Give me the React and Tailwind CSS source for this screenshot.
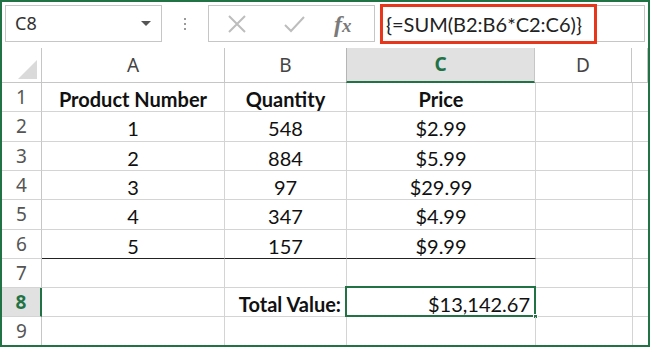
const cols = ["w-[40px]", "w-[183px]", "w-[122px]", "w-[189px]", "w-[97px]", "flex-1"];
const letters = ["", "A", "B", "C", "D", ""];
const heights = ["h-[29px]", "h-[30px]", "h-[29px]", "h-[29px]", "h-[30px]", "h-[29px]", "h-[29px]", "h-[29px]", "h-[29px]"];

const rows = [
  ["Product Number", "Quantity", "Price"],
  ["1", "548", "$2.99"],
  ["2", "884", "$5.99"],
  ["3", "97", "$29.99"],
  ["4", "347", "$4.99"],
  ["5", "157", "$9.99"],
  ["", "", ""],
  ["", "Total Value:", "$13,142.67"],
  ["", "", ""],
];

const cellFont = { fontFamily: "Lato, 'Open Sans', sans-serif" };

const TopBar = () => (
  <div className="flex items-start h-[46px] pt-[3px] bg-white">
    <div className="ml-[3px] w-[157px] h-[37px] border border-[#c6c6c6] flex items-center pl-[9px] pr-[10px]">
      <span className="text-[18px] text-[#333] flex-1" style={{ fontFamily: "'Noto Sans', sans-serif" }}>
        C8
      </span>
      <span className="w-0 h-0 border-l-[5px] border-r-[5px] border-t-[5px] border-l-transparent border-r-transparent border-t-[#555]" />
    </div>
    <div className="w-[46px] h-[37px] flex flex-col items-center justify-center gap-[3px]">
      <span className="w-[2px] h-[2px] bg-[#9a9a9a]" />
      <span className="w-[2px] h-[2px] bg-[#9a9a9a]" />
      <span className="w-[2px] h-[2px] bg-[#9a9a9a]" />
    </div>
    <div className="w-[167px] h-[37px] border border-[#c6c6c6] flex items-center">
      <svg width="56" height="20" viewBox="0 0 56 20" className="ml-[1px]">
        <path d="M19 2 L35 18 M35 2 L19 18" stroke="#bdbdbd" strokeWidth="2" fill="none" />
      </svg>
      <svg width="56" height="20" viewBox="0 0 56 20">
        <path d="M19 11 L25 17 L38 3" stroke="#bdbdbd" strokeWidth="2" fill="none" />
      </svg>
      <span className="ml-[12px] text-[24px] italic text-[#7a7a7a] font-bold leading-none" style={{ fontFamily: "'Liberation Serif', serif" }}>
        f<span className="text-[19px]">x</span>
      </span>
    </div>
    <div className="relative ml-[5px] mr-[3px] flex-1 h-[37px] border border-[#c6c6c6]">
      <div className="absolute -top-[2px] -left-px w-[217px] h-[40px] border-[3px] border-[#e8361b] flex items-center pl-[3px]">
        <span className="text-[20px] text-[#222]" style={cellFont}>
          {"{=SUM(B2:B6*C2:C6)}"}
        </span>
      </div>
    </div>
  </div>
);

const HeaderRow = () => (
  <div className="flex h-[35px]">
    {cols.map((c, i) => {
      if (i === 0)
        return (
          <div key={i} className={`${c} border-r border-b border-[#c6c6c6] relative`}>
            <svg className="absolute right-[4px] bottom-[3px]" width="19" height="19" viewBox="0 0 19 19">
              <path d="M19 0 L19 19 L0 19 Z" fill="#dadada" />
            </svg>
          </div>
        );
      const sel = i === 3;
      return (
        <div
          key={i}
          className={`${c} flex items-center justify-center text-[19px] ${
            sel
              ? "bg-[#e1e1e1] border-r border-[#c6c6c6] border-b-2 border-b-[#217346] text-[#217346] font-bold border-l border-l-[#b5b5b5] -ml-px"
              : "border-r border-b border-[#c6c6c6] text-[#444]"
          }`}
          style={{ fontFamily: "'Noto Sans', sans-serif" }}
        >
          {letters[i]}
        </div>
      );
    })}
  </div>
);

const DataRow = ({ idx, cells }) => {
  const n = idx + 1;
  const selRow = n === 8;
  const bold = n === 1;
  const thickBottom = n === 6;
  return (
    <div className={`flex ${heights[idx]}`}>
      <div
        className={`${cols[0]} flex items-center justify-center text-[19px] border-b border-[#d4d4d4] ${
          selRow
            ? "bg-[#e1e1e1] border-r-2 border-r-[#217346] text-[#217346] font-bold"
            : "border-r border-r-[#c6c6c6] text-[#555]"
        }`}
        style={{ fontFamily: "'Noto Sans', sans-serif" }}
      >
        {n}
      </div>
      {[1, 2, 3].map((ci) => {
        const text = cells[ci - 1];
        const right = n === 8;
        const isTotalLabel = n === 8 && ci === 2;
        const isSel = n === 8 && ci === 3;
        return (
          <div
            key={ci}
            className={`${cols[ci]} relative flex items-center border-r border-[#d4d4d4] ${
              thickBottom ? "border-b border-b-[#222]" : "border-b border-b-[#d4d4d4]"
            } ${right ? "justify-end pr-[5px]" : "justify-center"} ${
              bold || isTotalLabel ? "font-bold" : ""
            } text-[20px] text-[#111] pt-[3px]`}
            style={cellFont}
          >
            {text}
            {isSel && (
              <>
                <div className="absolute -top-[2px] -left-[2px] -right-px -bottom-px border-2 border-[#217346]" />
                <div className="absolute -right-[3px] -bottom-[3px] w-[5px] h-[5px] bg-[#217346] border border-white" />
              </>
            )}
          </div>
        );
      })}
      <div className={`${cols[4]} border-r border-b border-[#d4d4d4]`} />
      <div className={`${cols[5]} border-b border-[#d4d4d4]`} />
    </div>
  );
};

export default function App() {
  return (
    <div className="w-[650px] h-[347px] border-2 border-[#217346] bg-white overflow-hidden">
      <TopBar />
      <HeaderRow />
      {rows.map((cells, i) => (
        <DataRow key={i} idx={i} cells={cells} />
      ))}
    </div>
  );
}
